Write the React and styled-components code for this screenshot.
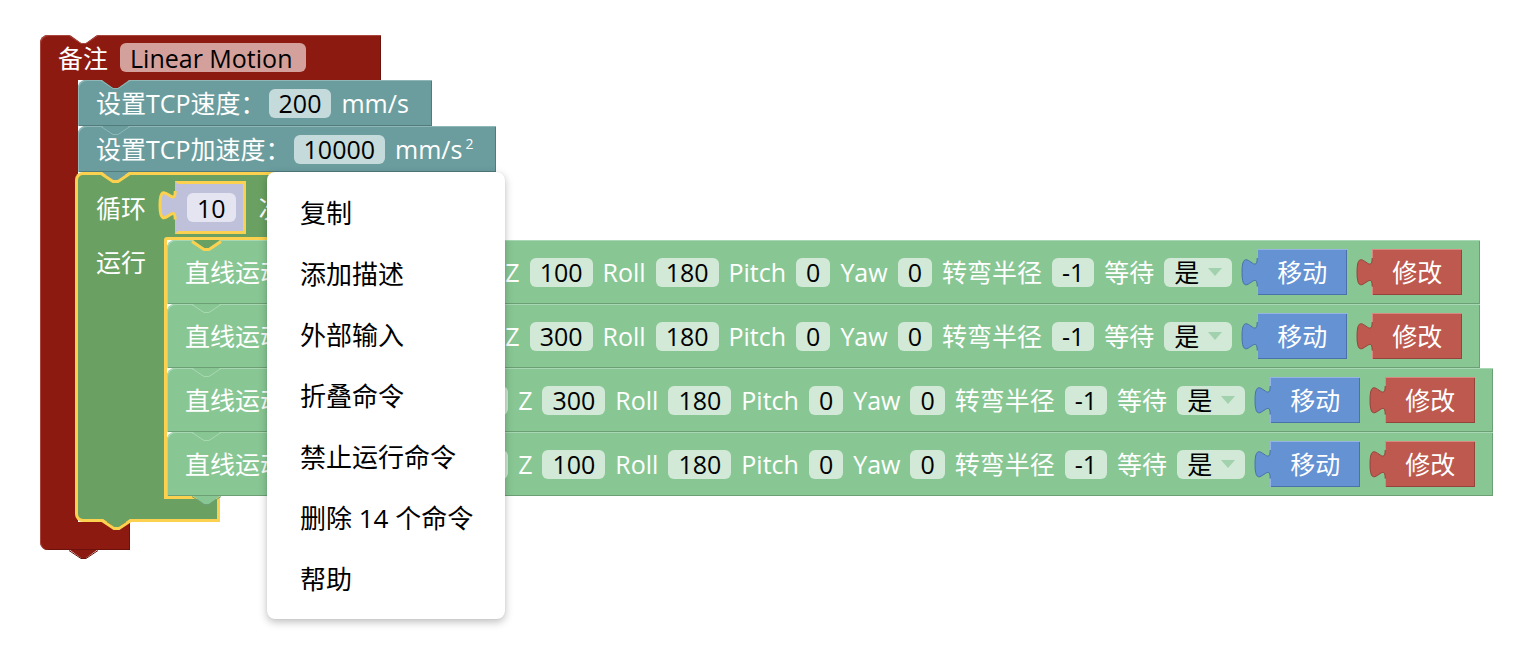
import React from "react";
import styled, { createGlobalStyle } from "styled-components";

const C = {
  red: "#8d1a11",
  redLight: "#a8463d",
  redDark: "#6a120b",
  redField: "#d4a09b",
  teal: "#6b9d9e",
  tealLight: "#8fb7b7",
  tealDark: "#527b7c",
  tealField: "#c4dadb",
  loop: "#6aa162",
  yellow: "#fcd14f",
  lav: "#bec1d9",
  lavField: "#e4e5f1",
  lg: "#88c794",
  lgLight: "#a8d8b2",
  lgDark: "#6c9f76",
  lgField: "#d1e9d6",
  arrow: "#a2d1ad",
  blue: "#6492d3",
  blueLight: "#95b4e3",
  blueDark: "#4b71a8",
  brick: "#bd594e",
  brickLight: "#d88a82",
  brickDark: "#94443b",
};

const GlobalStyle = createGlobalStyle`
  html, body { margin: 0; padding: 0; background: #fff; }
  body { font-family: "Open Sans", "Noto Sans CJK SC", sans-serif; }
`;

const Workspace = styled.div`
  position: relative;
  width: 1534px;
  height: 656px;
  overflow: hidden;
  box-sizing: border-box;
  padding: 35px 0 0 40px;
  background: #fff;
  font-family: "Open Sans", "Noto Sans CJK SC", sans-serif;
  font-size: 25px;
  line-height: 30px;
  color: #fff;
`;

/* ---------- small drawings ---------- */

const NotchSvg = styled.svg`
  position: absolute;
  left: ${(p) => p.$left}px;
  top: ${(p) => p.$top};
  width: 27px;
  height: 8px;
  overflow: visible;
  z-index: ${(p) => p.$z};
  pointer-events: none;
`;

function Notch({ fill, stroke, sw = 1, left = 24, top = "0px", z = 1 }) {
  const o = sw / 2;
  return (
    <NotchSvg $left={left} $top={top} $z={z} viewBox="0 0 27 8">
      <polygon points="0,0 11,8 16,8 27,0" fill={fill} />
      {stroke && (
        <polyline
          points={`-1,${o} 11,${8 + o} 16,${8 + o} 28,${o}`}
          fill="none"
          stroke={stroke}
          strokeWidth={sw}
          strokeLinejoin="round"
        />
      )}
    </NotchSvg>
  );
}

const TAB_D = "M15.2,0 C15.2,19 0,-15.2 0,14.25 S15.2,9.5 15.2,28.5";

const TabSvg = styled.svg`
  position: absolute;
  left: ${(p) => p.$left}px;
  top: ${(p) => p.$top}px;
  width: 19px;
  height: 29px;
  overflow: visible;
  pointer-events: none;
`;

function PuzzleTab({ fill, stroke, sw = 1, left, top }) {
  return (
    <TabSvg $left={left} $top={top} viewBox="0 0 19 29">
      <path d={`${TAB_D} L19,28.5 L19,0 Z`} fill={fill} />
      <path d={TAB_D} fill="none" stroke={stroke} strokeWidth={sw} />
    </TabSvg>
  );
}

const ArrowSvg = styled.svg`
  width: 14px;
  height: 8px;
  flex: none;
`;

/* ---------- shared text parts ---------- */

const Label = styled.span`
  white-space: nowrap;
  margin-right: ${(p) => p.$mr || 0}px;
`;

const Field = styled.span`
  display: inline-flex;
  align-items: center;
  justify-content: center;
  gap: 9px;
  box-sizing: border-box;
  height: 29px;
  min-width: 34px;
  padding: 0 ${(p) => p.$pr || 10}px 0 10px;
  border-radius: 6px;
  background: ${(p) => p.$bg};
  color: #000;
  white-space: nowrap;
`;

const Sup = styled.sup`
  font-size: 14px;
  line-height: 14px;
  vertical-align: 10px;
  margin-left: 3px;
`;

/* ---------- comment (red C-block) ---------- */

const CommentBlock = styled.div`
  display: flex;
  flex-direction: column;
  align-items: flex-start;
`;

const CommentHeader = styled.div`
  position: relative;
  display: flex;
  align-items: center;
  gap: 12px;
  width: 341px;
  height: 45px;
  box-sizing: border-box;
  padding-left: 18px;
  background: ${C.red};
  border-radius: 8px 0 0 0;
  box-shadow: inset 1px 1px 0 ${C.redLight}, inset -1px 0 0 ${C.redDark};
`;

const CommentBody = styled.div`
  display: flex;
  align-items: stretch;
`;

const CommentArm = styled.div`
  flex: none;
  width: 38px;
  background: ${C.red};
  box-shadow: inset 1px 0 0 ${C.redLight};
`;

const Stack = styled.div`
  display: flex;
  flex-direction: column;
  align-items: flex-start;
`;

const CommentFooter = styled.div`
  position: relative;
  width: 90px;
  height: 28px;
  background: ${C.red};
  border-radius: 0 0 0 8px;
  box-shadow: inset 1px 0 0 ${C.redLight}, inset -1px -1px 0 ${C.redDark};
`;

/* ---------- teal set blocks ---------- */

const SetBlock = styled.div`
  position: relative;
  display: flex;
  align-items: center;
  gap: 10px;
  height: 46px;
  box-sizing: border-box;
  padding: 0 23px 0 18px;
  background: ${C.teal};
  border-radius: 8px 0 0 0;
  box-shadow: inset 1px 1px 0 ${C.tealLight}, inset -1px -1px 0 ${C.tealDark};
`;

/* ---------- loop block ---------- */

const LoopBlock = styled.div`
  display: flex;
  flex-direction: column;
  align-items: flex-start;
  margin-left: -3px;
`;

const LoopHeader = styled.div`
  position: relative;
  display: flex;
  align-items: center;
  gap: 13px;
  height: 68px;
  box-sizing: border-box;
  padding: 0 22px 0 18px;
  background: ${C.loop};
  border: 3px solid ${C.yellow};
  border-bottom: none;
  border-radius: 8px 0 0 0;

  &::after {
    content: "";
    position: absolute;
    left: 86px;
    right: 0;
    bottom: 0;
    height: 3px;
    background: ${C.yellow};
    border-top-left-radius: 3px;
  }
`;

const CountBlock = styled.div`
  position: relative;
  display: flex;
  align-items: center;
  margin-left: 16px;
  height: 53px;
  box-sizing: border-box;
  padding: 0 7px 0 9px;
  background: ${C.lav};
  border: 3px solid ${C.yellow};
  border-left-color: ${C.lav};
`;

const LoopMiddle = styled.div`
  display: flex;
  align-items: stretch;
`;

const LoopArm = styled.div`
  flex: none;
  width: 92px;
  box-sizing: border-box;
  padding: 7px 0 0 18px;
  background: ${C.loop};
  border-left: 3px solid ${C.yellow};
  border-right: 3px solid ${C.yellow};
`;

const LoopFooter = styled.div`
  position: relative;
  width: 145px;
  height: 26px;
  box-sizing: border-box;
  background: ${C.loop};
  border: 3px solid ${C.yellow};
  border-top: none;
  border-radius: 0 0 0 8px;

  &::before {
    content: "";
    position: absolute;
    left: 86px;
    right: 0;
    top: 0;
    height: 3px;
    background: ${C.yellow};
  }
`;

/* ---------- linear motion blocks ---------- */

const LinearBlock = styled.div`
  position: relative;
  display: flex;
  align-items: center;
  gap: 10px;
  height: 64px;
  box-sizing: border-box;
  padding: 0 18px;
  background: ${C.lg};
  border-radius: 8px 0 0 0;
  box-shadow: inset 1px 1px 0 ${C.lgLight}, inset -1px -1px 0 ${C.lgDark};
  white-space: nowrap;
`;

const Slot = styled.div`
  position: relative;
  flex: none;
  display: flex;
  align-items: center;
  justify-content: center;
  margin-left: 15px;
  width: 90px;
  height: 46px;
  box-sizing: border-box;
  background: ${(p) => p.$bg};
  box-shadow: inset 1px 1px 0 ${(p) => p.$light}, inset -1px -1px 0 ${(p) => p.$dark};
  color: #fff;
`;

/* ---------- context menu ---------- */

const Menu = styled.div`
  position: absolute;
  left: 267px;
  top: 172px;
  z-index: 10;
  width: 238px;
  box-sizing: border-box;
  padding: 10px 0;
  background: #fff;
  border-radius: 8px;
  box-shadow: 0 3px 9px rgba(0, 0, 0, 0.26), 0 0 1px rgba(0, 0, 0, 0.12);
`;

const MenuItem = styled.div`
  display: flex;
  align-items: center;
  height: 61px;
  padding-left: 33px;
  font-size: 26px;
  color: #000;
  white-space: nowrap;
`;

const rows = [
  { x: "-400", y: "-300", z: "100" },
  { x: "-400", y: "-300", z: "300" },
  { x: "-400", y: "250.0", z: "300" },
  { x: "-400", y: "250.0", z: "100" },
];

const menuItems = ["复制", "添加描述", "外部输入", "折叠命令", "禁止运行命令", "删除 14 个命令", "帮助"];

function ValueSlot({ text, bg, light, dark }) {
  return (
    <Slot $bg={bg} $light={light} $dark={dark}>
      <PuzzleTab fill={bg} stroke={dark} left={-15.2} top={9} />
      {text}
    </Slot>
  );
}

function LinearRow({ row, index, last }) {
  return (
    <LinearBlock>
      {index === 0 ? (
        <Notch fill={C.loop} stroke={C.yellow} sw={3} left={26} />
      ) : (
        <Notch fill={C.lg} stroke={C.lgLight} left={26} />
      )}
      <Label>直线运动</Label>
      <Label>X</Label>
      <Field $bg={C.lgField}>{row.x}</Field>
      <Label>Y</Label>
      <Field $bg={C.lgField}>{row.y}</Field>
      <Label>Z</Label>
      <Field $bg={C.lgField}>{row.z}</Field>
      <Label>Roll</Label>
      <Field $bg={C.lgField}>180</Field>
      <Label>Pitch</Label>
      <Field $bg={C.lgField}>0</Field>
      <Label>Yaw</Label>
      <Field $bg={C.lgField}>0</Field>
      <Label>转弯半径</Label>
      <Field $bg={C.lgField}>-1</Field>
      <Label>等待</Label>
      <Field $bg={C.lgField}>
        是
        <ArrowSvg viewBox="0 0 14 8">
          <polygon points="0,0 14,0 7,8" fill={C.arrow} />
        </ArrowSvg>
      </Field>
      <ValueSlot text="移动" bg={C.blue} light={C.blueLight} dark={C.blueDark} />
      <ValueSlot text="修改" bg={C.brick} light={C.brickLight} dark={C.brickDark} />
      {last && <Notch fill={C.lg} stroke={C.lgDark} left={26} top="100%" z={3} />}
    </LinearBlock>
  );
}

function Loop() {
  return (
    <LoopBlock>
      <LoopHeader>
        <Notch fill={C.teal} stroke={C.yellow} sw={3} left={24} top="-3px" />
        <Label>循环</Label>
        <CountBlock>
          <PuzzleTab fill={C.lav} stroke={C.yellow} sw={3} left={-18.2} top={7} />
          <Field $bg={C.lavField}>10</Field>
        </CountBlock>
        <Label>次</Label>
      </LoopHeader>
      <LoopMiddle>
        <LoopArm>
          <Label>运行</Label>
        </LoopArm>
        <Stack>
          {rows.map((r, i) => (
            <LinearRow key={i} row={r} index={i} last={i === rows.length - 1} />
          ))}
        </Stack>
      </LoopMiddle>
      <LoopFooter>
        <Notch fill={C.loop} stroke={C.yellow} sw={3} left={25} top="100%" z={2} />
      </LoopFooter>
    </LoopBlock>
  );
}

export default function App() {
  return (
    <>
      <GlobalStyle />
      <Workspace>
        <CommentBlock>
          <CommentHeader>
            <Notch fill="#fff" stroke={C.redLight} left={30} />
            <Label>备注</Label>
            <Field $bg={C.redField} $pr={14}>
              Linear Motion
            </Field>
          </CommentHeader>
          <CommentBody>
            <CommentArm />
            <Stack>
              <SetBlock>
                <Notch fill={C.red} stroke={C.tealLight} left={24} />
                <Label $mr={-7}>设置TCP速度：</Label>
                <Field $bg={C.tealField}>200</Field>
                <Label>mm/s</Label>
              </SetBlock>
              <SetBlock>
                <Notch fill={C.teal} stroke={C.tealLight} left={24} />
                <Label $mr={-7}>设置TCP加速度：</Label>
                <Field $bg={C.tealField}>10000</Field>
                <Label>
                  mm/s<Sup>2</Sup>
                </Label>
              </SetBlock>
              <Loop />
            </Stack>
          </CommentBody>
          <CommentFooter>
            <Notch fill={C.red} stroke={C.redDark} left={30} top="100%" />
          </CommentFooter>
        </CommentBlock>
        <Menu>
          {menuItems.map((m) => (
            <MenuItem key={m}>{m}</MenuItem>
          ))}
        </Menu>
      </Workspace>
    </>
  );
}
